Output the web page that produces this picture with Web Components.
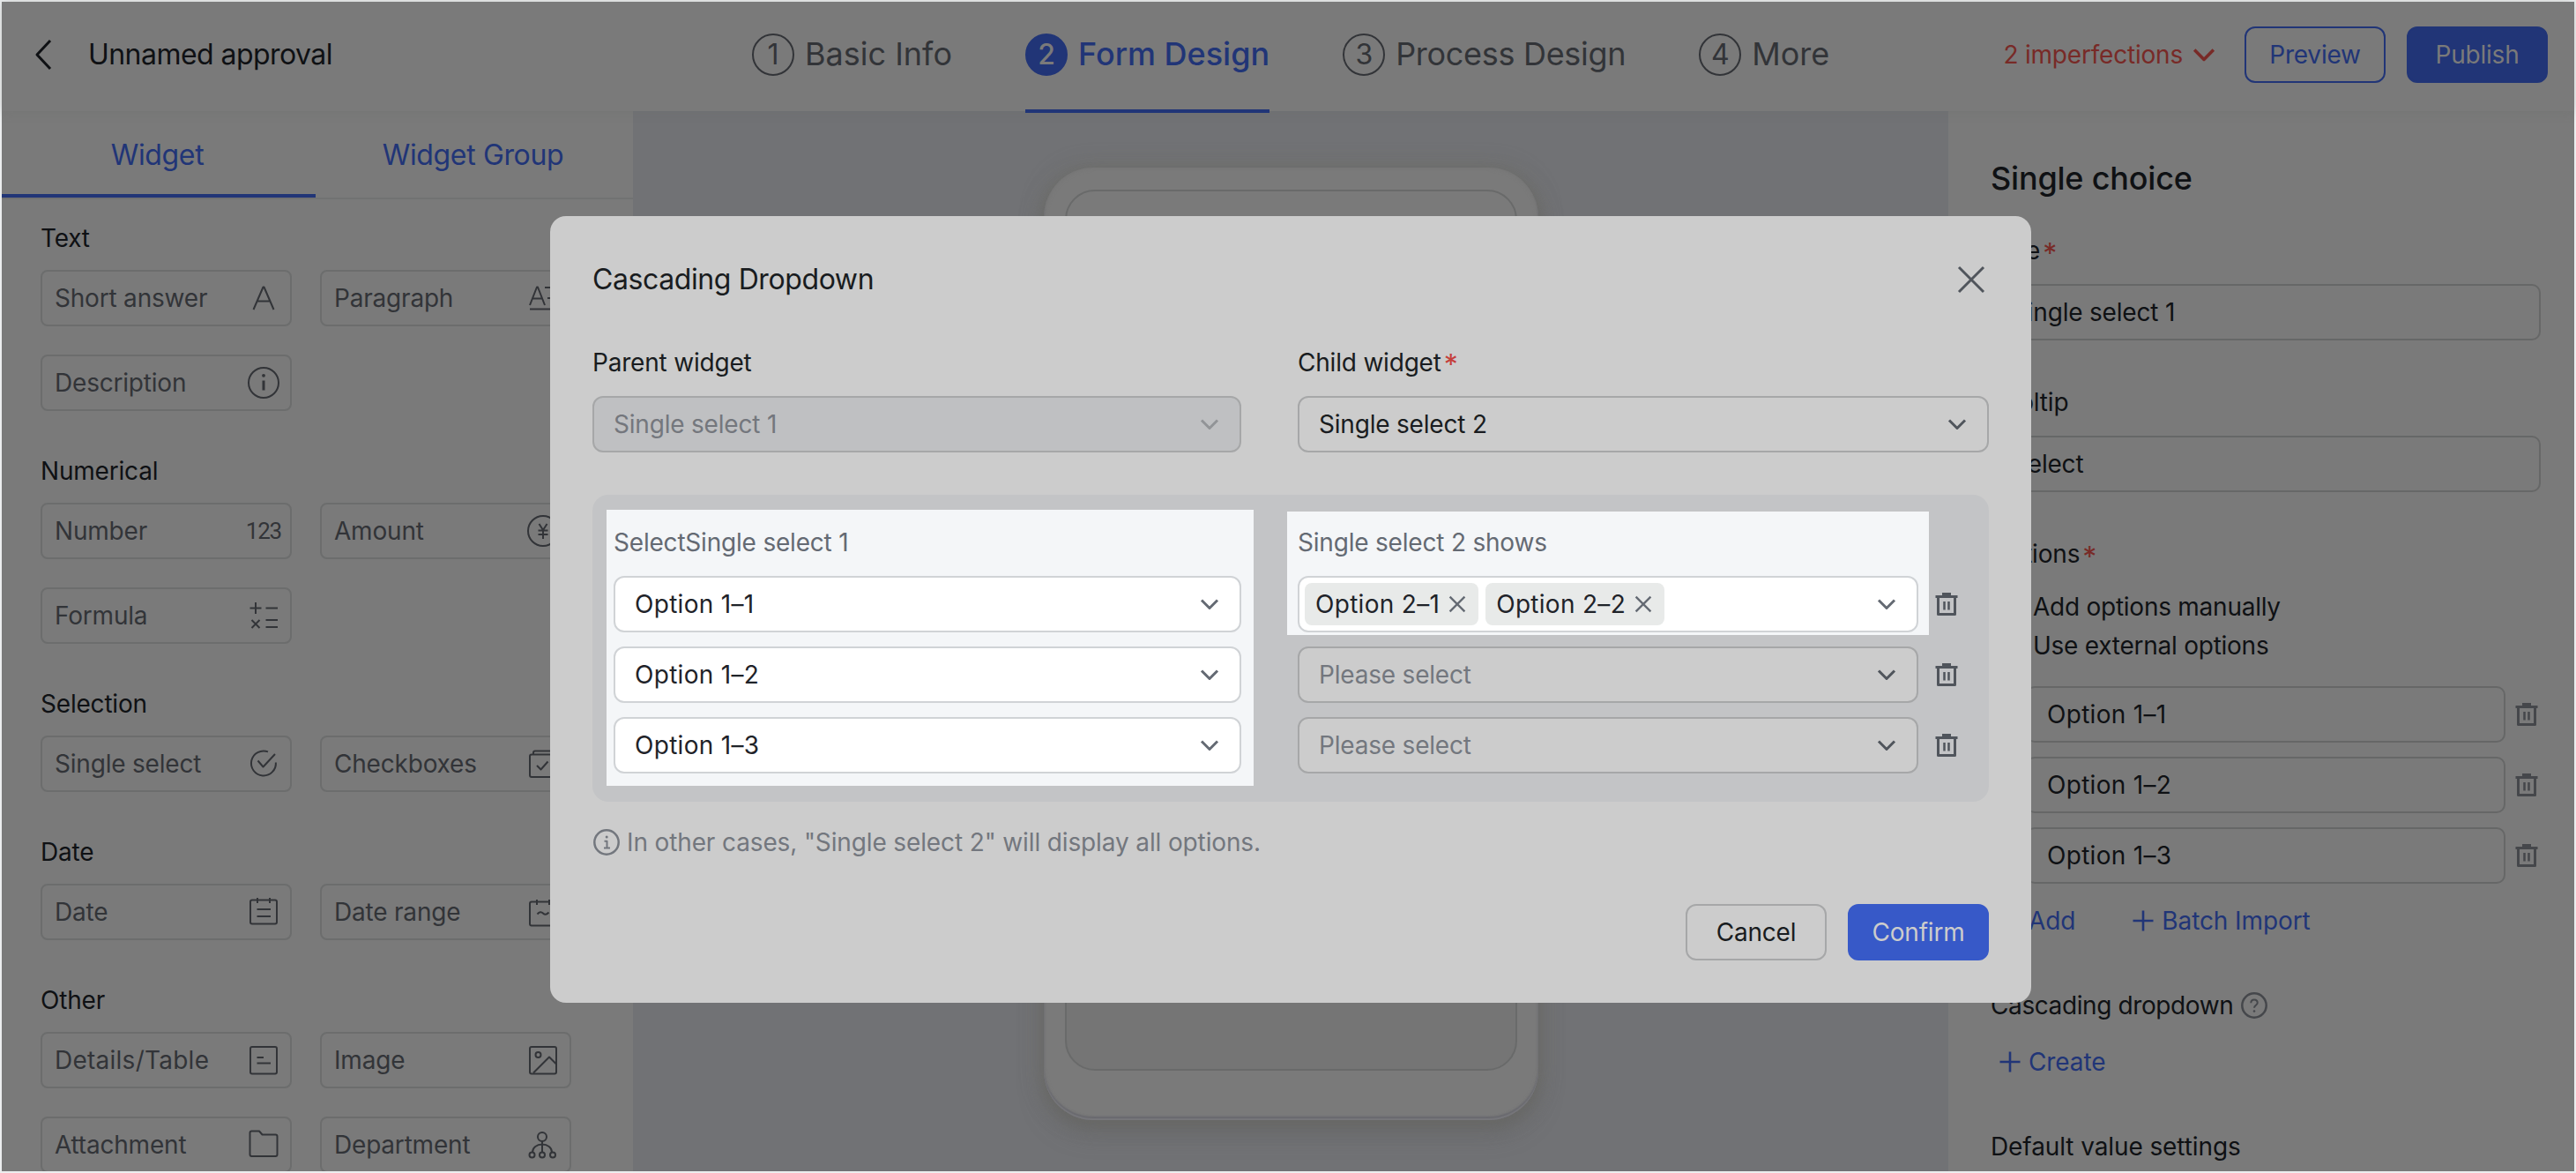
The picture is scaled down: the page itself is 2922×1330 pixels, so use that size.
<!DOCTYPE html>
<html lang="en">
<head>
<meta charset="utf-8">
<title>Form Design</title>
<style>
  html, body {
    margin: 0;
    height: 100%;
    overflow: hidden;
  }
  body {
    font-family: Inter, "Liberation Sans", sans-serif;
    font-size: 28px;
    line-height: 44px;
    letter-spacing: -0.2px;
    color: #0f1114;
    background: #eceeef;
    --muted: #323438;
    --blue: #213577;
    --red: #782a27;
    --surface: #7a7a7a;
    --line: #6c6d6d;
  }
</style>
</head>
<body>
<approval-app></approval-app>

<script>
const ICONS = {
  back: '<path d="M28 4 13 20 28 36" stroke-width="3"/>',
  down: '<path d="m11 15.500 9 9 9-9" stroke-width="3"/>',
  close: '<path d="M6 6 34 34M34 6 6 34" stroke-width="3"/>',
  cross: '<path d="M6 6 34 34M34 6 6 34" stroke-width="4"/>',
  plus: '<path d="M20 8.500V31.500M8.500 20H31.500" stroke-width="2.600"/>',
  letter: '<path d="M8.500 33 19.500 7.500h1L31.500 33M12.800 23.500H27.200"/>',
  paragraph: '<path d="M5 28 13 7.500h1L22 28M8.500 20.500H18.500M22 8H35M25 20H35M5 32.500H35"/>',
  info: '<circle cx="20" cy="20" r="17"/><circle cx="20" cy="11.800" r="1.900" fill="currentColor" stroke="none"/><path d="M20 17.500V28.500" stroke-width="3"/>',
  yen: '<circle cx="20" cy="20" r="17"/><path d="m15.500 12 4.500 7 4.500-7M20 19V29M14.500 19.500H25.500M14.500 24H25.500"/>',
  formula: '<path d="M11 5V18M4.500 11.500H17.500M22.500 11.500H36M6.500 25 15.500 34M15.500 25 6.500 34M22.500 25H36M22.500 33H36"/>',
  select: '<path d="M25 6.400A14 14 0 1 0 33.900 18.500M13.500 16.500 19.500 23.500 33 9"/>',
  checkbox: '<rect x="5" y="9.500" width="26" height="25.500" rx="2"/><path d="M9 9V7.500Q9 5.500 11 5.500H34Q36 5.500 36 7.500V31M13 22l4.500 4.500 8-9"/>',
  date: '<rect x="5" y="6.500" width="30" height="27" rx="2"/><path d="M13 4V10M27 4V10M12.500 17H28M12.500 25H28"/>',
  range: '<rect x="5" y="8.500" width="30" height="27" rx="2"/><path d="M13 6V12M27 6V12M13.500 22.500q3.500-4 6.500-1t6.500-1"/>',
  details: '<rect x="5" y="5" width="30" height="30.500" rx="2"/><path d="M12.500 17H20M12.500 23.500H28"/>',
  image: '<rect x="5" y="5" width="30" height="30.500" rx="2"/><circle cx="14.500" cy="14" r="3"/><path d="M9 34.500 27 16.500 35 24.500"/>',
  folder: '<path d="M4.500 6.500q0-2 2-2H15l3.500 4H33.500q2 0 2 2V31q0 2-2 2H6.500q-2 0-2-2Z"/>',
  department: '<circle cx="19" cy="11" r="5"/><path d="M19 16V28M8 28.500C8 23 13 19.500 19 19.500S30 23 30 28.500"/><circle cx="7.500" cy="31.500" r="3"/><circle cx="19" cy="31.500" r="3"/><circle cx="31" cy="31.500" r="3"/>',
  trash: '<path d="M7.500 11.500H32.500M10.500 11.500V31.500H29.500V11.500" stroke-width="3"/><path d="M15 9H25" stroke-width="4"/><path d="M17.500 17V26.500M22.500 17V26.500" stroke-width="2.500"/>',
  note: '<circle cx="20" cy="20" r="13.700" stroke-width="2.500"/><circle cx="20.200" cy="14" r="1.500" fill="currentColor" stroke="none"/><path d="M17.500 18.800H20.500V26.500M17 26.500H24"/>',
  help: '<circle cx="20" cy="20" r="13.700" stroke-width="2.500"/><path d="M16.300 17.300q0-3.800 3.700-3.800t3.700 3.500c0 2.700-3.700 2.800-3.700 5.700"/><circle cx="20" cy="26.500" r="1.300" fill="currentColor" stroke="none"/>',
};

class AppIcon extends HTMLElement {
  constructor() {
    super();
    this.attachShadow({ mode: "open" });
  }

  connectedCallback() {
    this.shadowRoot.innerHTML = `
      <style>
        :host { display: block; width: 40px; height: 40px; flex: none; }
        svg { display: block; width: 100%; height: 100%; }
      </style>
      <svg viewBox="0 0 40 40" fill="none" stroke="currentColor" stroke-width="2" stroke-linejoin="round">${ICONS[this.getAttribute("name")]}</svg>
    `;
  }
}
customElements.define("app-icon", AppIcon);

class AppButton extends HTMLElement {
  constructor() {
    super();
    this.attachShadow({ mode: "open" });
  }

  connectedCallback() {
    this.shadowRoot.innerHTML = `
      <style>
        :host { display: block; width: 160px; height: 64px; flex: none; }
        button {
          width: 100%;
          height: 100%;
          box-sizing: border-box;
          padding: 0;
          font: inherit;
          letter-spacing: inherit;
          color: var(--btn-color);
          background: var(--btn-bg, transparent);
          border: 2px solid var(--btn-border);
          border-radius: 12px;
        }
      </style>
      <button><slot></slot></button>
    `;
  }
}
customElements.define("app-button", AppButton);

class StepItem extends HTMLElement {
  constructor() {
    super();
    this.attachShadow({ mode: "open" });
  }

  connectedCallback() {
    this.shadowRoot.innerHTML = `
      <style>
        :host {
          display: flex;
          align-items: center;
          gap: 12px;
          height: 120px;
          font-size: 36px;
          letter-spacing: 0;
          color: var(--muted);
          white-space: nowrap;
        }
        :host([active]) {
          color: var(--blue);
          font-weight: 500;
        }
        .num {
          width: 48px;
          height: 48px;
          box-sizing: border-box;
          border: 2px solid currentColor;
          border-radius: 50%;
          font-size: 32px;
          line-height: 44px;
          text-align: center;
          font-weight: 400;
        }
        .text { padding-bottom: 3px; }
        /* the active underline hangs 2px below the header */
        :host([active]) { height: 126px; box-sizing: border-box; padding-bottom: 2px; border-bottom: 4px solid var(--blue); }
        :host([active]) .num { background: var(--blue); border-color: var(--blue); color: var(--surface); font-weight: 500; }
      </style>
      <span class="num">${this.getAttribute("num")}</span><span class="text"><slot></slot></span>
    `;
  }
}
customElements.define("step-item", StepItem);

class AppHeader extends HTMLElement {
  constructor() {
    super();
    this.attachShadow({ mode: "open" });
  }

  connectedCallback() {
    this.shadowRoot.innerHTML = `
      <style>
        :host {
          display: grid;
          grid-template-columns: 851px 1fr auto;
          height: 124px;
          background: var(--surface);
          position: relative;
          z-index: 1;
          box-shadow: 0 0 12px rgba(100, 102, 98, 0.25);
        }
        .left { display: flex; align-items: center; height: 120px; padding-left: 27px; }
        .left span { font-size: 32px; margin-left: 31px; letter-spacing: -0.55px; }
        .steps { display: flex; align-items: flex-start; gap: 83px; }
        .right { display: flex; align-items: center; height: 120px; padding-right: 30px; }
        .warn { display: flex; align-items: center; color: var(--red); margin-right: 22px; }
        .warn app-icon { width: 48px; height: 48px; }
        .right app-button + app-button { margin-left: 24px; }
        .ghost { --btn-color: var(--blue); --btn-border: var(--blue); }
        .solid { --btn-color: var(--surface); --btn-border: var(--blue); --btn-bg: var(--blue); }
      </style>
      <div class="left"><app-icon name="back"></app-icon><span>Unnamed approval</span></div>
      <div class="steps">
        <step-item num="1">Basic Info</step-item>
        <step-item num="2" active>Form Design</step-item>
        <step-item num="3" style="letter-spacing:-0.3px">Process Design</step-item>
        <step-item num="4">More</step-item>
      </div>
      <div class="right">
        <div class="warn">2 imperfections<app-icon name="down"></app-icon></div>
        <app-button class="ghost">Preview</app-button>
        <app-button class="solid">Publish</app-button>
      </div>
    `;
  }
}
customElements.define("app-header", AppHeader);

class WidgetBox extends HTMLElement {
  constructor() {
    super();
    this.attachShadow({ mode: "open" });
  }

  connectedCallback() {
    const icon = this.getAttribute("icon");
    this.shadowRoot.innerHTML = `
      <style>
        :host {
          display: flex;
          align-items: center;
          justify-content: space-between;
          box-sizing: border-box;
          height: 64px;
          padding: 0 10px 0 14px;
          border: 2px solid var(--line);
          border-radius: 8px;
          color: var(--muted);
          white-space: nowrap;
        }
        .digits { font: 400 26px Roboto, sans-serif; letter-spacing: -1.2px; }
      </style>
      <slot></slot>
      ${icon === "123" ? '<span class="digits">123</span>' : `<app-icon name="${icon}"></app-icon>`}
    `;
  }
}
customElements.define("widget-box", WidgetBox);

class WidgetSection extends HTMLElement {
  constructor() {
    super();
    this.attachShadow({ mode: "open" });
  }

  connectedCallback() {
    this.shadowRoot.innerHTML = `
      <style>
        :host { display: block; margin-bottom: 46px; }
        h4 { margin: 0 0 14px; font: inherit; }
        .grid { display: grid; grid-template-columns: 285px 285px; gap: 32px; }
      </style>
      <h4>${this.getAttribute("heading")}</h4>
      <div class="grid"><slot></slot></div>
    `;
  }
}
customElements.define("widget-section", WidgetSection);

class WidgetPanel extends HTMLElement {
  constructor() {
    super();
    this.attachShadow({ mode: "open" });
  }

  connectedCallback() {
    this.shadowRoot.innerHTML = `
      <style>
        :host { display: block; background: var(--surface); overflow: hidden; }
        nav {
          display: grid;
          grid-template-columns: 356px 1fr;
          height: 98px;
          border-bottom: 2px solid #717272;
          font-size: 32px;
          letter-spacing: -0.35px;
          color: var(--blue);
          text-align: center;
          line-height: 99px;
        }
        nav span { height: 98px; box-sizing: border-box; padding-right: 3px; }
        nav span:first-child { box-shadow: inset 0 -4px var(--blue); }
        .list { padding: 22px 0 0 44px; }
      </style>
      <nav><span>Widget</span><span>Widget Group</span></nav>
      <div class="list">
        <widget-section heading="Text">
          <widget-box icon="letter">Short answer</widget-box>
          <widget-box icon="paragraph">Paragraph</widget-box>
          <widget-box icon="info">Description</widget-box>
        </widget-section>
        <widget-section heading="Numerical">
          <widget-box icon="123">Number</widget-box>
          <widget-box icon="yen">Amount</widget-box>
          <widget-box icon="formula">Formula</widget-box>
        </widget-section>
        <widget-section heading="Selection">
          <widget-box icon="select">Single select</widget-box>
          <widget-box icon="checkbox">Checkboxes</widget-box>
        </widget-section>
        <widget-section heading="Date">
          <widget-box icon="date">Date</widget-box>
          <widget-box icon="range">Date range</widget-box>
        </widget-section>
        <widget-section heading="Other">
          <widget-box icon="details" style="letter-spacing:0.25px">Details/Table</widget-box>
          <widget-box icon="image">Image</widget-box>
          <widget-box icon="folder">Attachment</widget-box>
          <widget-box icon="department">Department</widget-box>
        </widget-section>
      </div>
    `;
  }
}
customElements.define("widget-panel", WidgetPanel);

class PhonePreview extends HTMLElement {
  constructor() {
    super();
    this.attachShadow({ mode: "open" });
  }

  connectedCallback() {
    this.shadowRoot.innerHTML = `
      <style>
        :host {
          display: flex;
          justify-content: center;
          align-items: flex-start;
          padding-top: 64px;
          background: #717275;
          overflow: hidden;
        }
        .phone {
          box-sizing: border-box;
          width: 561px;
          height: 1080px;
          padding: 25px 24px 56px;
          border-radius: 56px;
          background: var(--surface);
          box-shadow: inset 0 -2px 1px #77777b, inset 0 -4px 2px #68686e, inset 0 0 5px #737373,
            0 0 24px rgba(112, 112, 106, 0.9), 0 4px 10px rgba(90, 90, 90, 0.45), 0 14px 26px rgba(96, 96, 96, 0.55);
        }
        .screen {
          box-sizing: border-box;
          height: 100%;
          border: 2px solid #696a6a;
          border-radius: 34px;
          background: linear-gradient(#7a7a7a 50%, #757575 50%);
        }
      </style>
      <div class="phone"><div class="screen"></div></div>
    `;
  }
}
customElements.define("phone-preview", PhonePreview);

class TextField extends HTMLElement {
  constructor() {
    super();
    this.attachShadow({ mode: "open" });
  }

  connectedCallback() {
    this.shadowRoot.innerHTML = `
      <style>
        :host {
          display: flex;
          align-items: center;
          box-sizing: border-box;
          height: 64px;
          padding-left: 22px;
          border: 2px solid #666767;
          border-radius: 10px;
          flex: 1;
        }
      </style>
      <slot></slot>
    `;
  }
}
customElements.define("text-field", TextField);

class SettingsPanel extends HTMLElement {
  constructor() {
    super();
    this.attachShadow({ mode: "open" });
  }

  connectedCallback() {
    this.shadowRoot.innerHTML = `
      <style>
        :host { display: block; background: var(--surface); padding: 54px 38px 0 48px; overflow: hidden; }
        h2 { margin: 0; font-size: 36px; font-weight: 500; line-height: 44px; }
        label { display: flex; height: 44px; margin: 48px 0 16px; }
        label.first { margin-top: 38px; }
        i { font-style: normal; color: var(--red); margin: 4px 0 0 3px; font-size: 32px; }
        .radio { display: flex; align-items: center; gap: 12px; height: 44px; letter-spacing: -0.25px; }
        .radio::before {
          content: "";
          box-sizing: border-box;
          width: 32px;
          height: 32px;
          margin: 0 2px 0 2px;
          border: 2px solid #5c5d5f;
          border-radius: 50%;
        }
        .radio.on::before { border: 8px solid var(--blue); }
        .options { display: grid; gap: 16px; margin-top: 24px; }
        .row { display: flex; align-items: center; letter-spacing: 0.3px; margin: 0 -4px 0 40px; }
        .row app-icon { color: #45474b; margin-left: 4px; }
        .links { display: flex; align-items: center; color: var(--blue); height: 44px; margin-top: 20px; letter-spacing: -0.1px; }
        .links app-icon { margin-left: 2px; }
        .links span { margin: 0 55px 0 1px; }
        .caption { display: flex; align-items: center; height: 44px; margin-top: 52px; letter-spacing: -0.4px; }
        .caption app-icon { color: #45474b; margin-left: 4px; }
      </style>
      <h2>Single choice</h2>
      <label class="first">Title<i>*</i></label>
      <text-field>Single select 1</text-field>
      <label>Tooltip</label>
      <text-field>Select</text-field>
      <label>Options<i>*</i></label>
      <div class="radio on">Add options manually</div>
      <div class="radio">Use external options</div>
      <div class="options">
        <div class="row"><text-field>Option 1–1</text-field><app-icon name="trash"></app-icon></div>
        <div class="row"><text-field>Option 1–2</text-field><app-icon name="trash"></app-icon></div>
        <div class="row"><text-field>Option 1–3</text-field><app-icon name="trash"></app-icon></div>
      </div>
      <div class="links"><app-icon name="plus"></app-icon><span>Add</span><app-icon name="plus"></app-icon><span>Batch Import</span></div>
      <div class="caption">Cascading dropdown<app-icon name="help"></app-icon></div>
      <div class="links"><app-icon name="plus"></app-icon><span>Create</span></div>
      <div class="caption" style="letter-spacing:-0.1px">Default value settings</div>
    `;
  }
}
customElements.define("settings-panel", SettingsPanel);

class SelectBox extends HTMLElement {
  constructor() {
    super();
    this.attachShadow({ mode: "open" });
  }

  connectedCallback() {
    this.shadowRoot.innerHTML = `
      <style>
        :host {
          display: flex;
          align-items: center;
          justify-content: space-between;
          box-sizing: border-box;
          height: 64px;
          padding: 0 14px 0 22px;
          border: 2px solid #a6a7a8;
          border-radius: 12px;
          background: #ccc;
          color: #191c20;
        }
        :host([disabled]) { background: #bfc0c2; color: #74777d; }
        :host([placeholder]) { color: #73777e; }
        :host([lit]) { background: #fff; border-color: #d0d3d6; color: #1f2329; }
        :host([tags]) { padding-left: 6px; }
        .value { display: flex; gap: 8px; }
        app-icon { color: #50555c; }
        :host([disabled]) app-icon { color: #929497; }
        :host([lit]) app-icon { color: #646a73; }
      </style>
      <div class="value"><slot></slot></div>
      <app-icon name="down"></app-icon>
    `;
  }
}
customElements.define("select-box", SelectBox);

class OptionTag extends HTMLElement {
  constructor() {
    super();
    this.attachShadow({ mode: "open" });
  }

  connectedCallback() {
    this.shadowRoot.innerHTML = `
      <style>
        :host {
          display: flex;
          align-items: center;
          height: 48px;
          padding: 0 12px;
          border-radius: 8px;
          background: #e8eae9;
          letter-spacing: 0.3px;
        }
        app-icon { width: 24px; height: 24px; margin-left: 8px; color: #646a73; }
      </style>
      <slot></slot><app-icon name="cross"></app-icon>
    `;
  }
}
customElements.define("option-tag", OptionTag);

class CascadeModal extends HTMLElement {
  constructor() {
    super();
    this.attachShadow({ mode: "open" });
  }

  connectedCallback() {
    this.shadowRoot.innerHTML = `
      <style>
        :host {
          display: block;
          box-sizing: border-box;
          width: 1680px;
          height: 892px;
          padding: 48px;
          border-radius: 18px;
          background: #ccc;
          color: #191c20;
        }
        header { display: flex; justify-content: space-between; align-items: center; height: 48px; margin-bottom: 48px; }
        h3 { margin: 0; font-size: 32px; font-weight: 400; letter-spacing: -0.4px; }
        header app-icon { color: #50555c; }
        .widgets { display: grid; grid-template-columns: 736px 784px; gap: 64px; }
        label { display: flex; height: 44px; margin-bottom: 16px; }
        label i { font-style: normal; color: #c5403b; margin: 3px 0 0 3px; font-size: 32px; }
        .mapping {
          display: grid;
          grid-template-columns: 734px 728px 40px;
          column-gap: 38px;
          align-items: start;
          box-sizing: border-box;
          height: 348px;
          margin-top: 48px;
          padding-left: 16px;
          border-radius: 18px;
          background: #c3c4c6;
        }
        .lit { background: #f4f6f8; color: #646a73; }
        .from { height: 313px; margin-top: 17px; padding: 15px 14px 0 8px; box-sizing: border-box; }
        .from select-box + select-box { margin-top: 16px; }
        .from select-box { letter-spacing: 0.3px; }
        .to { margin-top: 19px; }
        .to .lit { height: 140px; padding: 13px 12px 0; box-sizing: border-box; }
        .to > select-box { margin: 13px 12px 16px; }
        .bins { margin: 104px 0 0 -38px; display: grid; gap: 40px; color: #50555c; }
        .note { display: flex; align-items: center; height: 44px; gap: 3px; margin: 24px 0 0 -4px; color: #73777e; letter-spacing: -0.13px; }
        footer { display: flex; justify-content: flex-end; gap: 24px; margin-top: 48px; }
        .cancel { --btn-color: #191c20; --btn-border: #a6a7a8; }
        .confirm { --btn-color: #ccc; --btn-border: #3759c8; --btn-bg: #3759c8; }
      </style>
      <header><h3>Cascading Dropdown</h3><app-icon name="close"></app-icon></header>
      <div class="widgets">
        <div><label>Parent widget</label><select-box disabled>Single select 1</select-box></div>
        <div><label>Child widget<i>*</i></label><select-box>Single select 2</select-box></div>
      </div>
      <div class="mapping">
        <div class="from lit">
          <label>SelectSingle select 1</label>
          <select-box lit>Option 1–1</select-box>
          <select-box lit>Option 1–2</select-box>
          <select-box lit>Option 1–3</select-box>
        </div>
        <div class="to">
          <div class="lit">
            <label>Single select 2 shows</label>
            <select-box lit tags><option-tag>Option 2–1</option-tag><option-tag>Option 2–2</option-tag></select-box>
          </div>
          <select-box placeholder>Please select</select-box>
          <select-box placeholder>Please select</select-box>
        </div>
        <div class="bins">
          <app-icon name="trash"></app-icon>
          <app-icon name="trash"></app-icon>
          <app-icon name="trash"></app-icon>
        </div>
      </div>
      <div class="note"><app-icon name="note"></app-icon>In other cases, "Single select 2" will display all options.</div>
      <footer>
        <app-button class="cancel">Cancel</app-button>
        <app-button class="confirm">Confirm</app-button>
      </footer>
    `;
  }
}
customElements.define("cascade-modal", CascadeModal);

class ApprovalApp extends HTMLElement {
  constructor() {
    super();
    this.attachShadow({ mode: "open" });
  }

  connectedCallback() {
    this.shadowRoot.innerHTML = `
      <style>
        :host {
          display: grid;
          grid-template-rows: 124px 1202px;
          box-sizing: border-box;
          width: 2922px;
          height: 1330px;
          padding: 2px;
          position: relative;
          overflow: hidden;
        }
        main { display: grid; grid-template-columns: 716px 1492px 710px; min-height: 0; }
        /* the dialog lies over the page */
        cascade-modal { position: absolute; left: 624px; top: 245px; z-index: 2; }
      </style>
      <app-header></app-header>
      <main>
        <widget-panel></widget-panel>
        <phone-preview></phone-preview>
        <settings-panel></settings-panel>
      </main>
      <cascade-modal></cascade-modal>
    `;
  }
}
customElements.define("approval-app", ApprovalApp);
</script>
</body>
</html>
